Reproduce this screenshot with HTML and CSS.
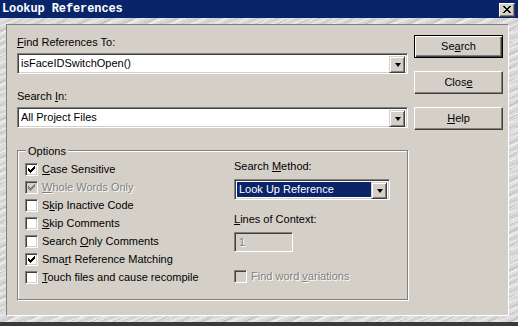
FILE: index.html
```html
<!DOCTYPE html>
<html>
<head>
<meta charset="utf-8">
<link rel="stylesheet" href="styles.css">
</head>
<body>
<div class="window">
  <div class="titlebar">
    <span class="title">Lookup References</span>
    <span class="xbtn">
      <svg width="8" height="7" viewBox="0 0 8 7" shape-rendering="crispEdges">
        <path d="M0 0h2v1h-2zM6 0h2v1h-2zM1 1h2v1h-2zM5 1h2v1h-2zM2 2h4v1h-4zM3 3h2v1h-2zM2 4h4v1h-4zM1 5h2v1h-2zM5 5h2v1h-2zM0 6h2v1h-2zM6 6h2v1h-2z" fill="#000"/>
      </svg>
    </span>
  </div>
  <div class="frame">
    <div class="panel">
      <div class="main">
        <div class="lbl first"><u>F</u>ind References To:</div>
        <div class="combo">
          <div class="field">isFaceIDSwitchOpen()</div>
          <div class="drop"><span class="arrow"></span></div>
        </div>
        <div class="lbl second">Search <u>I</u>n:</div>
        <div class="combo">
          <div class="field">All Project Files</div>
          <div class="drop"><span class="arrow"></span></div>
        </div>
        <div class="group">
          <span class="legend">Options</span>
          <div class="cols">
            <div class="checks">
              <div class="row"><span class="box"><svg class="chk" width="7" height="7" viewBox="0 0 7 7" shape-rendering="crispEdges"><path d="M0 2h1v3h-1zM1 3h1v3h-1zM2 4h1v3h-1zM3 3h1v3h-1zM4 2h1v3h-1zM5 1h1v3h-1zM6 0h1v3h-1z"/></svg></span><span><u>C</u>ase Sensitive</span></div>
              <div class="row dis"><span class="box"><svg class="chk" width="7" height="7" viewBox="0 0 7 7" shape-rendering="crispEdges"><path d="M0 2h1v3h-1zM1 3h1v3h-1zM2 4h1v3h-1zM3 3h1v3h-1zM4 2h1v3h-1zM5 1h1v3h-1zM6 0h1v3h-1z"/></svg></span><span><u>W</u>hole Words Only</span></div>
              <div class="row"><span class="box"></span><span>S<u>k</u>ip Inactive Code</span></div>
              <div class="row"><span class="box"></span><span><u>S</u>kip Comments</span></div>
              <div class="row"><span class="box"></span><span>Search <u>O</u>nly Comments</span></div>
              <div class="row"><span class="box"><svg class="chk" width="7" height="7" viewBox="0 0 7 7" shape-rendering="crispEdges"><path d="M0 2h1v3h-1zM1 3h1v3h-1zM2 4h1v3h-1zM3 3h1v3h-1zM4 2h1v3h-1zM5 1h1v3h-1zM6 0h1v3h-1z"/></svg></span><span>Sma<u>r</u>t Reference Matching</span></div>
              <div class="row"><span class="box"></span><span><u>T</u>ouch files and cause recompile</span></div>
            </div>
            <div class="side">
              <div class="lbl">Search <u>M</u>ethod:</div>
              <div class="combo small">
                <div class="field"><span class="sel">Look Up Reference</span></div>
                <div class="drop"><span class="arrow"></span></div>
              </div>
              <div class="lbl ctx"><u>L</u>ines of Context:</div>
              <div class="input">1</div>
              <div class="row dis var"><span class="box"></span><span>Find word <u>v</u>ariations</span></div>
            </div>
          </div>
        </div>
      </div>
      <div class="buttons">
        <div class="btn default"><span>Se<u>a</u>rch</span></div>
        <div class="btn"><span>Clos<u>e</u></span></div>
        <div class="btn"><span><u>H</u>elp</span></div>
      </div>
    </div>
  </div>
</div>
</body>
</html>
```

FILE: styles.css
```css
* { box-sizing: border-box; }
html, body { margin: 0; padding: 0; }
body {
  width: 518px;
  height: 326px;
  overflow: hidden;
  font-family: "Liberation Sans", Arial, sans-serif;
  font-size: 11px;
  line-height: 13px;
  color: #000;
  background: #d4d0c8;
}
u { text-decoration: underline; text-underline-offset: 1px; }

.window {
  width: 518px;
  height: 326px;
  display: flex;
  flex-direction: column;
}

.titlebar {
  height: 18px;
  background: #0a246a;
  display: flex;
  align-items: center;
  justify-content: space-between;
  padding: 0 3px 0 2px;
}
.title {
  font-family: "Liberation Mono", "Courier New", monospace;
  font-weight: bold;
  font-size: 12px;
  color: #fff;
  letter-spacing: -0.1px;
  padding-top: 1px;
}
.xbtn {
  width: 16px;
  height: 14px;
  margin-top: 1px;
  background: #d4d0c8;
  border-top: 1px solid #fff;
  border-left: 1px solid #fff;
  border-right: 1px solid #404040;
  border-bottom: 1px solid #404040;
  box-shadow: inset -1px -1px 0 #808080;
  display: flex;
  align-items: center;
  justify-content: center;
  padding-bottom: 1px;
}

.frame {
  flex: 1;
  display: flex;
  padding: 6px 10px 6px 6px;
  background-color: #d9d9d9;
  background-image:
    repeating-linear-gradient(160deg, rgba(255,255,255,0.55) 0 1px, rgba(0,0,0,0) 1px 4px, rgba(0,0,0,0.07) 4px 5px, rgba(0,0,0,0) 5px 7px),
    repeating-linear-gradient(150deg, rgba(0,0,0,0.05) 0 2px, rgba(255,255,255,0.25) 2px 5px, rgba(0,0,0,0) 5px 11px);
  border-bottom: 4px solid #3a3a3a;
}

.panel {
  flex: 1;
  background: #d4d0c8;
  border-top: 1px solid #808080;
  border-left: 1px solid #808080;
  border-right: 1px solid #fff;
  border-bottom: 1px solid #fff;
  display: flex;
  gap: 6px;
  padding: 10px 5px 0 10px;
}

.main {
  width: 391px;
  display: flex;
  flex-direction: column;
}

.lbl { height: 13px; white-space: nowrap; }
.lbl.first { margin-top: 1px; margin-bottom: 4px; }
.lbl.second { margin-top: 16px; margin-bottom: 4px; }

.combo {
  height: 21px;
  display: flex;
  background: #fff;
  border-top: 1px solid #808080;
  border-left: 1px solid #808080;
  border-right: 1px solid #fff;
  border-bottom: 1px solid #fff;
  box-shadow: inset 1px 1px 0 #404040, inset -1px -1px 0 #d4d0c8;
  padding: 2px;
}
.combo .field {
  flex: 1;
  padding-left: 1px;
  display: flex;
  align-items: center;
  white-space: nowrap;
}
.drop {
  width: 16px;
  height: 17px;
  background: #d4d0c8;
  border-top: 1px solid #d4d0c8;
  border-left: 1px solid #d4d0c8;
  border-right: 1px solid #404040;
  border-bottom: 1px solid #404040;
  box-shadow: inset 1px 1px 0 #fff, inset -1px -1px 0 #808080;
  display: flex;
  align-items: center;
  justify-content: center;
}
.arrow {
  width: 0;
  height: 0;
  border-left: 3.5px solid transparent;
  border-right: 3.5px solid transparent;
  border-top: 4px solid #000;
  margin-left: 1px;
}

.group {
  position: relative;
  margin-top: 22px;
  height: 150px;
  border: 1px solid #808080;
  box-shadow: inset 1px 1px 0 #fff, 1px 1px 0 #fff;
  padding: 9px 0 0 7px;
}
.legend {
  position: absolute;
  top: -6px;
  left: 8px;
  padding: 0 2px;
  background: #d4d0c8;
  line-height: 12px;
}

.cols { display: flex; }
.checks { width: 209px; display: flex; flex-direction: column; }

.row {
  height: 18px;
  display: flex;
  align-items: center;
  gap: 4px;
  white-space: nowrap;
}
.box {
  width: 13px;
  height: 13px;
  flex: none;
  background: #fff;
  border-top: 1px solid #808080;
  border-left: 1px solid #808080;
  border-right: 1px solid #fff;
  border-bottom: 1px solid #fff;
  box-shadow: inset 1px 1px 0 #404040, inset -1px -1px 0 #d4d0c8;
  display: flex;
  align-items: center;
  justify-content: center;
}
.chk { fill: #000; }
.row.dis { color: #808080; }
.row.dis > span:last-child { text-shadow: 1px 1px 0 #fff; }
.row.dis .box { background: #d4d0c8; }
.row.dis .chk { fill: #808080; }

.side { display: flex; flex-direction: column; }
.side .lbl { margin-bottom: 6px; }
.combo.small { width: 156px; }
.combo.small .field { padding: 0; }
.sel {
  width: 100%;
  height: 100%;
  background: #0a246a;
  color: #fff;
  display: flex;
  align-items: center;
  padding-left: 2px;
}
.lbl.ctx { margin-top: 13px; }
.input {
  width: 59px;
  height: 20px;
  background: #d4d0c8;
  border-top: 1px solid #808080;
  border-left: 1px solid #808080;
  border-right: 1px solid #fff;
  border-bottom: 1px solid #fff;
  box-shadow: inset 1px 1px 0 #404040, inset -1px -1px 0 #d4d0c8;
  color: #808080;
  text-shadow: 1px 1px 0 #fff;
  padding: 3px 0 0 4px;
}
.row.var { margin-top: 15px; }

.buttons {
  width: 89px;
  display: flex;
  flex-direction: column;
  gap: 13px;
}
.btn {
  height: 23px;
  background: #d4d0c8;
  border-top: 1px solid #fff;
  border-left: 1px solid #fff;
  border-right: 1px solid #404040;
  border-bottom: 1px solid #404040;
  box-shadow: inset -1px -1px 0 #808080;
  display: flex;
  align-items: center;
  justify-content: center;
}
.btn.default {
  border: 1px solid #000;
  box-shadow: inset 1px 1px 0 #fff, inset -1px -1px 0 #404040, inset -2px -2px 0 #808080;
}
```
